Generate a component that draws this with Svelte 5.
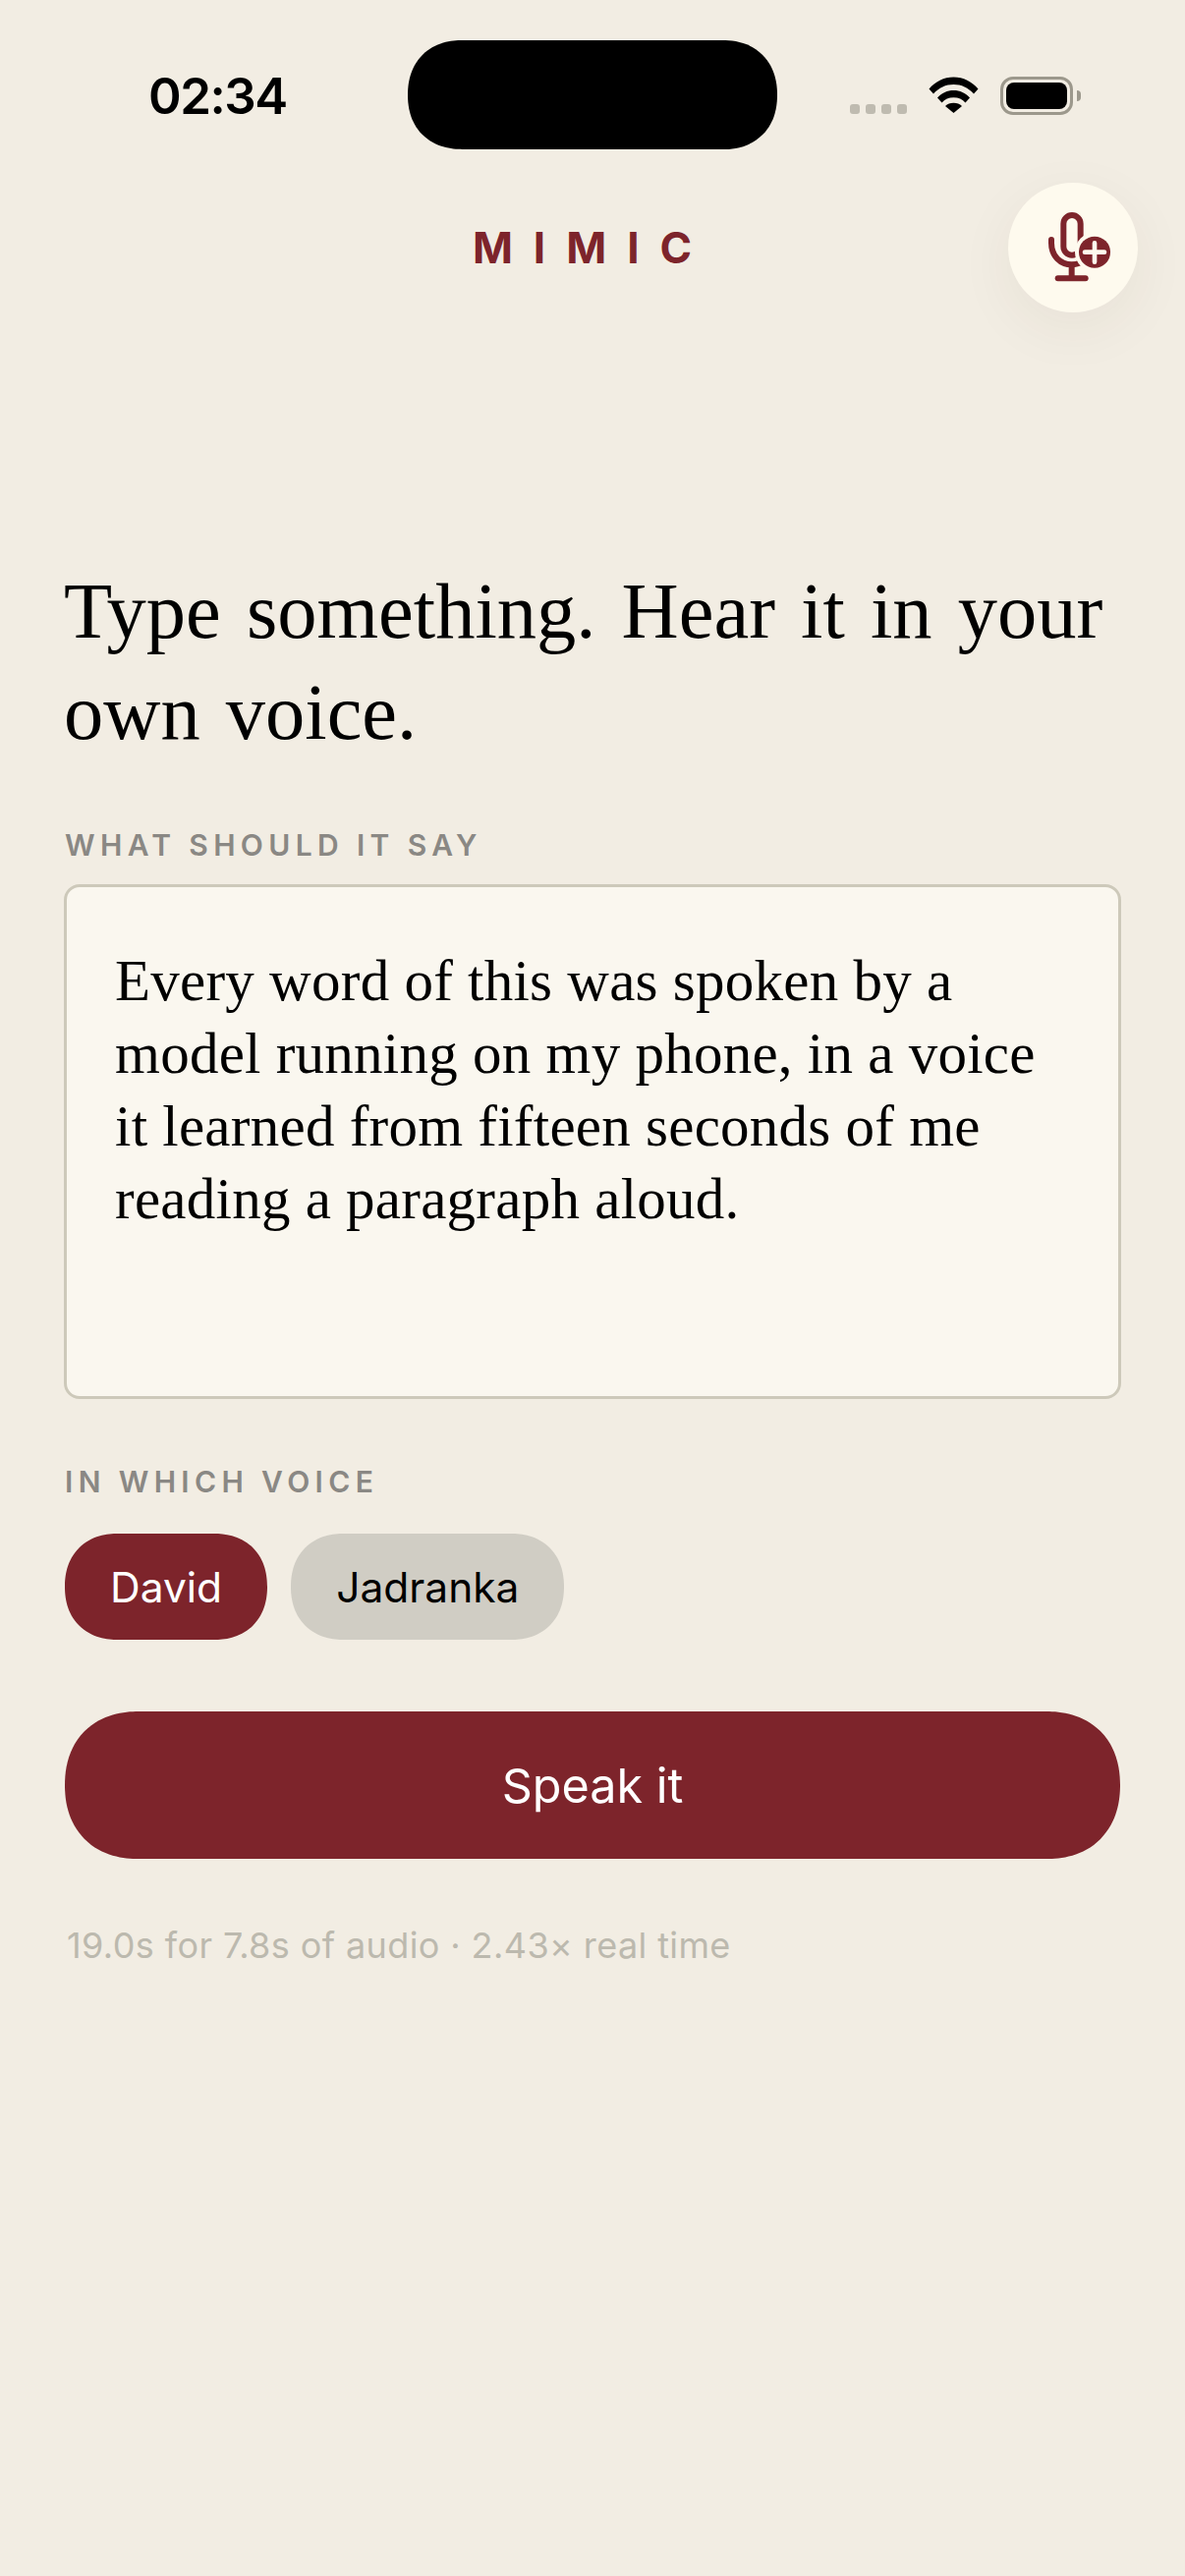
<script>
  const voices = [
    { name: 'David', active: true },
    { name: 'Jadranka', active: false }
  ];
</script>

<div class="page">
  <div class="status">
    <span class="time">02:34</span>
    <div class="status-right">
      <div class="dots"><i></i><i></i><i></i><i></i></div>
      <svg class="wifi" viewBox="0 0 51 37" width="51" height="37" aria-hidden="true">
        <path d="M0.5 12.5C7 5 15.5 0.5 25.5 0.5S44 5 50.5 12.5L46 17.5C40.5 11.3 33.5 8 25.5 8S10.500 11.300 5 17.500Z" fill="#000"/>
        <path d="M9 21.500C13.500 16.500 19 14 25.500 14S37.500 16.500 42 21.500L37.500 26.500C34.500 23 30.500 21.300 25.500 21.300S16.500 23 13.500 26.500Z" fill="#000"/>
        <path d="M17 30C19.300 27.800 22 26.800 25.500 26.800S31.700 27.800 34 30L25.500 37Z" fill="#000"/>
      </svg>
      <div class="battery"><div class="cell"></div><div class="nub"></div></div>
    </div>
    <div class="island"></div>
  </div>

  <header class="top">
    <span class="brand">MIMIC</span>
    <button class="add" aria-label="Add voice">
      <svg viewBox="138 108 396 396" width="132" height="132" aria-hidden="true">
        <rect x="307" y="207" width="52" height="122" rx="26" fill="none" stroke="#7d242b" stroke-width="18"/>
        <path d="M270 282V292C270 332 298 358 332 358C345 358 356 354 366 348" fill="none" stroke="#7d242b" stroke-width="18" stroke-linecap="round"/>
        <path d="M332 358V398" stroke="#7d242b" stroke-width="18"/>
        <path d="M290 400H374" stroke="#7d242b" stroke-width="18" stroke-linecap="round"/>
        <circle cx="402" cy="320" r="60" fill="#fefaee"/>
        <circle cx="402" cy="320" r="48" fill="#7d242b"/>
        <path d="M372 320H432M402 292V350" stroke="#fefaee" stroke-width="14" stroke-linecap="round"/>
      </svg>
    </button>
  </header>

  <main class="content">
    <h1>Type something. Hear it in your own voice.</h1>

    <div class="label first">WHAT SHOULD IT SAY</div>
    <div class="box">Every word of this was spoken by a model running on my phone, in a voice it learned from fifteen seconds of me reading a paragraph aloud.</div>

    <div class="label second">IN WHICH VOICE</div>
    <div class="chips">
      {#each voices as v}
        <button class="chip" class:active={v.active}>{v.name}</button>
      {/each}
    </div>

    <button class="speak">Speak it</button>
    <p class="meta">19.0s for 7.8s of audio · 2.43× real time</p>
  </main>
</div>

<style>
  :global(body) { margin: 0; background: #f2ede3; }
  .page {
    width: 1206px;
    height: 2622px;
    background: #f2ede3;
    font-family: Inter, "Liberation Sans", sans-serif;
    color: #000;
    overflow: hidden;
    box-sizing: border-box;
  }
  .status {
    position: relative;
    height: 186px;
    display: flex;
    justify-content: space-between;
    align-items: flex-start;
    padding: 66px 114px 0 151px;
    box-sizing: border-box;
  }
  .time {
    font-size: 51px;
    line-height: 64px;
    font-weight: 600;
    letter-spacing: -1.500px;
  }
  .status-right {
    display: flex;
    align-items: flex-start;
    margin-top: 12px;
  }
  .dots { display: flex; gap: 6px; margin: 28px 0 0 0; }
  .dots i { width: 10px; height: 10px; border-radius: 3px; background: #bfbbb0; display: block; }
  .wifi { margin: 0 22px 0 22px; }
  .battery {
    position: relative;
    width: 74px;
    height: 39px;
    box-sizing: border-box;
    border: 3px solid #9c988c;
    border-radius: 13px;
    padding: 3px;
  }
  .cell { height: 100%; background: #000; border-radius: 8px; }
  .nub {
    position: absolute;
    right: -11px;
    top: 11px;
    width: 4px;
    height: 11px;
    background: #9c988c;
    border-radius: 0 4px 4px 0;
  }
  .island {
    position: absolute;
    left: 415px;
    top: 41px;
    width: 376px;
    height: 111px;
    background: #000;
    border-radius: 56px;
    corner-shape: superellipse(1.15);
  }
  .top {
    position: relative;
    height: 132px;
    display: flex;
    justify-content: center;
    align-items: center;
  }
  .brand {
    color: #7d242b;
    font-size: 44px;
    font-weight: 700;
    letter-spacing: 21px;
  }
  .add {
    position: absolute;
    right: 48px;
    top: 0;
    width: 132px;
    height: 132px;
    padding: 0;
    border: 0;
    border-radius: 50%;
    background: #fefaee;
    box-shadow: 0 16px 60px rgba(60, 50, 30, 0.06);
    display: block;
  }
  .add svg { display: block; }
  .content { padding: 0 65px 0 66px; }
  h1 {
    margin: 0;
    padding-top: 252px;
    font-family: "Liberation Serif", serif;
    font-weight: 400;
    font-size: 80.500px;
    line-height: 103px;
    word-spacing: 6px;
    margin-left: -1px;
    color: #000;
    width: 1090px;
  }
  .label {
    font-size: 30px;
    font-weight: 600;
    line-height: 36px;
    letter-spacing: 5.350px;
    color: #8a8884;
  }
  .label.first { margin-top: 66px; }
  .label.second { margin-top: 66px; }
  .box {
    margin: 22px 0 0 -1px;
    height: 524px;
    box-sizing: border-box;
    border: 3px solid #cdc9ba;
    border-radius: 16px;
    background: #faf7ef;
    padding: 58px 60px 0 49px;
    font-family: "Liberation Serif", serif;
    font-size: 59px;
    line-height: 74px;
    letter-spacing: 0.250px;
  }
  .chips { display: flex; gap: 24px; margin-top: 35px; }
  .chip {
    height: 108px;
    border: 0;
    border-radius: 54px;
    corner-shape: superellipse(1.15);
    padding: 0 46px;
    font: 400 42.500px Inter, sans-serif;
    background: #d0cdc4;
    color: #000;
  }
  .chip.active { background: #7d242b; color: #fff; }
  .speak {
    display: block;
    width: 1074px;
    height: 150px;
    margin-top: 73px;
    border: 0;
    border-radius: 75px;
    corner-shape: superellipse(1.15);
    background: #7d242b;
    color: #fff;
    font: 400 48.500px Inter, sans-serif;
  }
  .meta {
    margin: 66px 0 0 2px;
    font-size: 36px;
    line-height: 44px;
    letter-spacing: 0.400px;
    color: #bcb9ae;
  }
</style>
